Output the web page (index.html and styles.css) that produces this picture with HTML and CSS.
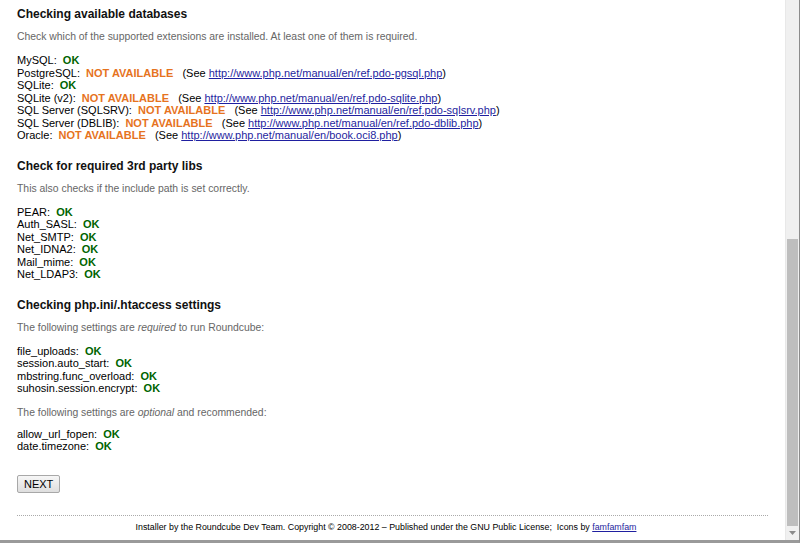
FILE: index.html
```html
<!DOCTYPE html>
<html>
<head>
<meta charset="utf-8">
<link rel="stylesheet" href="styles.css">
</head>
<body>
<div class="frame">
  <div class="page">
    <div class="content">
      <h3>Checking available databases</h3>
      <p class="hint">Check which of the supported extensions are installed. At least one of them is required.</p>
      <div class="list">
        <div>MySQL:&nbsp; <span class="success">OK</span></div>
        <div>PostgreSQL:&nbsp; <span class="na">NOT AVAILABLE</span>&nbsp;&nbsp; (See <a href="#">http://www.php.net/manual/en/ref.pdo-pgsql.php</a>)</div>
        <div>SQLite:&nbsp; <span class="success">OK</span></div>
        <div>SQLite (v2):&nbsp; <span class="na">NOT AVAILABLE</span>&nbsp;&nbsp; (See <a href="#">http://www.php.net/manual/en/ref.pdo-sqlite.php</a>)</div>
        <div>SQL Server (SQLSRV):&nbsp; <span class="na">NOT AVAILABLE</span>&nbsp;&nbsp; (See <a href="#">http://www.php.net/manual/en/ref.pdo-sqlsrv.php</a>)</div>
        <div>SQL Server (DBLIB):&nbsp; <span class="na">NOT AVAILABLE</span>&nbsp;&nbsp; (See <a href="#">http://www.php.net/manual/en/ref.pdo-dblib.php</a>)</div>
        <div>Oracle:&nbsp; <span class="na">NOT AVAILABLE</span>&nbsp;&nbsp; (See <a href="#">http://www.php.net/manual/en/book.oci8.php</a>)</div>
      </div>

      <h3>Check for required 3rd party libs</h3>
      <p class="hint">This also checks if the include path is set correctly.</p>
      <div class="list">
        <div>PEAR:&nbsp; <span class="success">OK</span></div>
        <div>Auth_SASL:&nbsp; <span class="success">OK</span></div>
        <div>Net_SMTP:&nbsp; <span class="success">OK</span></div>
        <div>Net_IDNA2:&nbsp; <span class="success">OK</span></div>
        <div>Mail_mime:&nbsp; <span class="success">OK</span></div>
        <div>Net_LDAP3:&nbsp; <span class="success">OK</span></div>
      </div>

      <h3>Checking php.ini/.htaccess settings</h3>
      <p class="hint">The following settings are <em>required</em> to run Roundcube:</p>
      <div class="list">
        <div>file_uploads:&nbsp; <span class="success">OK</span></div>
        <div>session.auto_start:&nbsp; <span class="success">OK</span></div>
        <div>mbstring.func_overload:&nbsp; <span class="success">OK</span></div>
        <div>suhosin.session.encrypt:&nbsp; <span class="success">OK</span></div>
      </div>
      <p class="hint">The following settings are <em>optional</em> and recommended:</p>
      <div class="list">
        <div>allow_url_fopen:&nbsp; <span class="success">OK</span></div>
        <div>date.timezone:&nbsp; <span class="success">OK</span></div>
      </div>

      <div class="actions"><button class="btn">NEXT</button></div>

      <div class="footer">Installer by the Roundcube Dev Team. Copyright &copy; 2008-2012 &ndash; Published under the GNU Public License;&nbsp; Icons by <a href="#">famfamfam</a></div>
    </div>
  </div>
  <div class="scrollbar">
    <div class="track"></div>
    <div class="thumb"></div>
    <div class="arrow"><svg width="9" height="6" viewBox="0 0 9 6"><path d="M1 1h7L4.5 5z" fill="#8a8a8a"/></svg></div>
  </div>
</div>
</body>
</html>
```

FILE: styles.css
```css
html, body {
  margin: 0;
  padding: 0;
  width: 800px;
  height: 543px;
  overflow: hidden;
  background: #fff;
}
body {
  font-family: "Liberation Sans", Arial, sans-serif;
  font-size: 11px;
  color: #000;
}
.frame {
  display: flex;
  width: 800px;
  height: 543px;
  box-sizing: border-box;
  border-right: 1px solid #8c8c8c;
  border-bottom: 3px solid #9a9a9a;
}
.page {
  flex: 1;
  min-width: 0;
}
.content {
  padding: 0 17px;
}
h3 {
  font-size: 12px;
  font-weight: bold;
  margin: 6px 0 0;
  line-height: 16px;
  color: #111;
}
.list + h3 {
  margin-top: 16px;
}
.hint {
  color: #666;
  font-size: 10.4px;
  margin: 8px 0 10px;
  line-height: 14px;
}
.list {
  line-height: 12.5px;
}
.list + .hint {
  margin: 11px 0 8px;
}
.success {
  color: #006400;
  font-weight: bold;
}
.na {
  color: #e6731e;
  font-weight: bold;
}
a {
  color: #1f1fa0;
  text-decoration: underline;
}
.actions {
  margin-top: 22px;
}
.btn {
  font-family: "Liberation Sans", Arial, sans-serif;
  font-size: 11px;
  height: 18px;
  padding: 0 6px;
  background: linear-gradient(#f6f6f6, #dedede);
  border: 1px solid #a8a8a8;
  border-radius: 2px;
  color: #000;
}
.footer {
  margin-top: 22px;
  border-top: 1px dotted #aaa;
  padding: 5px 13px 0 0;
  text-align: center;
  font-size: 8.85px;
  line-height: 12px;
}
.scrollbar {
  width: 13px;
  display: flex;
  flex-direction: column;
  background: #f0f0f0;
  border-left: 1px solid #e8e8e8;
}
.track {
  height: 239px;
}
.thumb {
  flex: 1;
  background: #bebebe;
  margin: 0 1px;
}
.arrow {
  height: 14px;
  display: flex;
  align-items: center;
  justify-content: center;
}
```
